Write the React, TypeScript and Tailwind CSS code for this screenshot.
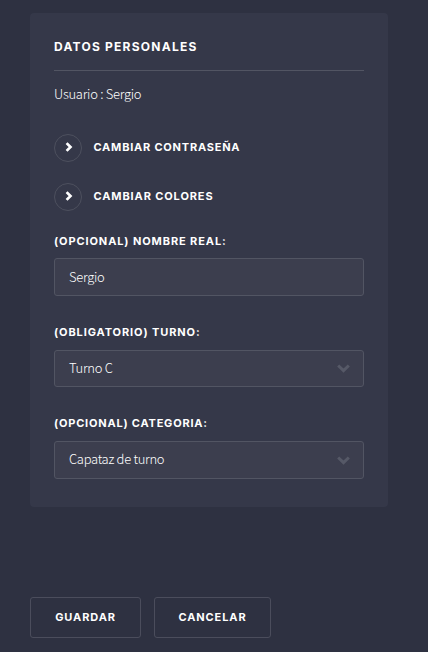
import type { ReactNode } from 'react';

const heading = "font-['Inter','Liberation_Sans',sans-serif] font-bold text-white whitespace-nowrap";
const body = "font-['Noto_Sans_CJK_SC','Noto_Sans',sans-serif] font-light text-white whitespace-nowrap";

function ActionLink({ children, spacing }: { children: ReactNode; spacing: string }) {
  return (
    <a href="#" className="flex h-7 items-center gap-[11.5px]">
      <span className="flex size-7 items-center justify-center rounded-full border border-[#4d505e]">
        <svg viewBox="0 0 8 10" className="ml-px h-2.5 w-2 -translate-y-px" fill="none" stroke="#fff" strokeWidth="2.7">
          <path d="M1.6 1.1 5.5 5 1.6 8.9" />
        </svg>
      </span>
      <span className={`${heading} text-[11px] leading-4 -translate-y-px ${spacing}`}>{children}</span>
    </a>
  );
}

function Label({ children, spacing }: { children: ReactNode; spacing: string }) {
  return <div className={`${heading} h-4 text-[11px] leading-4 ${spacing}`}>{children}</div>;
}

function Select({ value, size }: { value: string; size: string }) {
  return (
    <button type="button" className={`flex w-full items-center justify-between rounded-[3px] border border-[#525563] bg-[#3c3e4e] pr-[13.5px] pl-3.5 ${size}`}>
      <span className={`${body} -translate-y-px text-[13px] leading-5 tracking-[-0.3px]`}>{value}</span>
      <svg viewBox="0 0 13 9" className="h-[9px] w-[13px]" fill="none" stroke="#565967" strokeWidth="3">
        <path d="M1.2 1.5 6.5 6.6 11.8 1.5" />
      </svg>
    </button>
  );
}

export default function App() {
  return (
    <main className="h-[652px] w-[428px] overflow-hidden bg-[#2e3141] pt-[13px] pl-[30px]">
      <section className="h-[494px] w-[358px] rounded bg-[#353849] px-6 pt-[25px]">
        <h2 className={`${heading} h-[33px] border-b border-[#525563] text-[12px] leading-[17px] tracking-[1.24px]`}>DATOS PERSONALES</h2>
        <p className={`${body} mt-[13px] h-5 text-[13px] leading-5 tracking-[-0.28px]`}>Usuario : Sergio</p>
        <div className="mt-[30px] flex flex-col gap-[21px]">
          <ActionLink spacing="tracking-[0.78px]">CAMBIAR CONTRASEÑA</ActionLink>
          <ActionLink spacing="tracking-[0.88px]">CAMBIAR COLORES</ActionLink>
        </div>
        <div className="mt-[22px]">
          <Label spacing="tracking-[0.9px]">(OPCIONAL) NOMBRE REAL:</Label>
          <input
            defaultValue="Sergio"
            className={`${body} mt-[9px] block h-[38px] w-full rounded-[3px] border border-[#525563] bg-[#3c3e4e] px-3.5 pb-0.5 text-[13px] tracking-[-0.28px] outline-none`}
          />
        </div>
        <div className="mt-[28px]">
          <Label spacing="tracking-[0.9px]">(OBLIGATORIO) TURNO:</Label>
          <div className="mt-[10px]"><Select value="Turno C" size="h-[37px]" /></div>
        </div>
        <div className="mt-[28px]">
          <Label spacing="tracking-[0.8px]">(OPCIONAL) CATEGORIA:</Label>
          <div className="mt-[10px]"><Select value="Capataz de turno" size="h-[38px]" /></div>
        </div>
      </section>
      <div className="mt-[90px] flex gap-[13px]">
        <button type="button" className={`${heading} h-[41px] w-[111px] rounded-[3px] border border-[#4b4d5c] text-[11px] tracking-[0.9px]`}>GUARDAR</button>
        <button type="button" className={`${heading} h-[41px] w-[117px] rounded-[3px] border border-[#4b4d5c] text-[11px] tracking-[0.9px]`}>CANCELAR</button>
      </div>
    </main>
  );
}
